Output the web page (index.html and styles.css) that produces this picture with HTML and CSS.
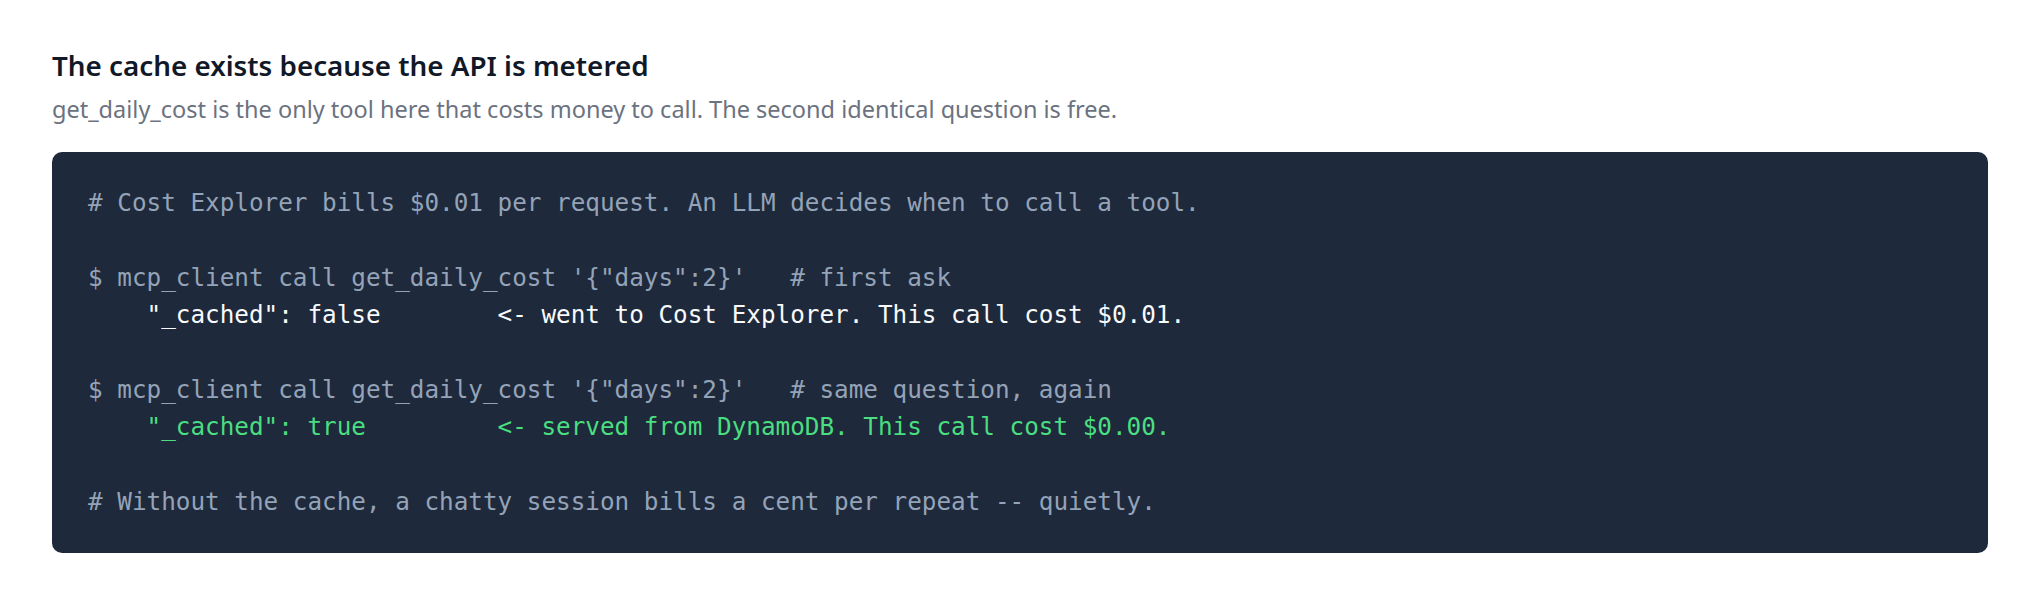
FILE: index.html
```html
<!DOCTYPE html>
<html lang="en">
<head>
<meta charset="utf-8">
<title>Cache</title>
<link rel="stylesheet" href="styles.css">
</head>
<body>
<section class="section">
  <h2 class="title">The cache exists because the API is metered</h2>
  <p class="subtitle">get_daily_cost is the only tool here that costs money to call. The second identical question is free.</p>
  <pre class="code"><span class="muted"># Cost Explorer bills $0.01 per request. An LLM decides when to call a tool.</span>

<span class="muted">$ mcp_client call get_daily_cost '{"days":2}'   # first ask</span>
<span class="bright">    "_cached": false        &lt;- went to Cost Explorer. This call cost $0.01.</span>

<span class="muted">$ mcp_client call get_daily_cost '{"days":2}'   # same question, again</span>
<span class="green">    "_cached": true         &lt;- served from DynamoDB. This call cost $0.00.</span>

<span class="muted"># Without the cache, a chatty session bills a cent per repeat -- quietly.</span></pre>
</section>
</body>
</html>
```
FILE: styles.css
```css
html, body {
  margin: 0;
  padding: 0;
  background: #ffffff;
}

.section {
  padding: 47px 52px 45px;
  font-family: "Noto Sans", "Open Sans", sans-serif;
}

.title {
  margin: 0;
  font-size: 27.8px;
  font-weight: 600;
  line-height: 36px;
  color: #111827;
}

.subtitle {
  margin: 10px 0 0;
  font-size: 23.5px;
  line-height: 32px;
  color: #6b7280;
}

.code {
  margin: 27px 0 0;
  padding: 32px 36px;
  background: #1e293b;
  border-radius: 10px;
  font-family: "DejaVu Sans Mono", "Liberation Mono", monospace;
  font-size: 24.3px;
  line-height: 37.4px;
  color: #94a3b8;
  white-space: pre;
}

.muted { color: #94a3b8; }
.bright { color: #f8fafc; }
.green { color: #4ade80; }
```
